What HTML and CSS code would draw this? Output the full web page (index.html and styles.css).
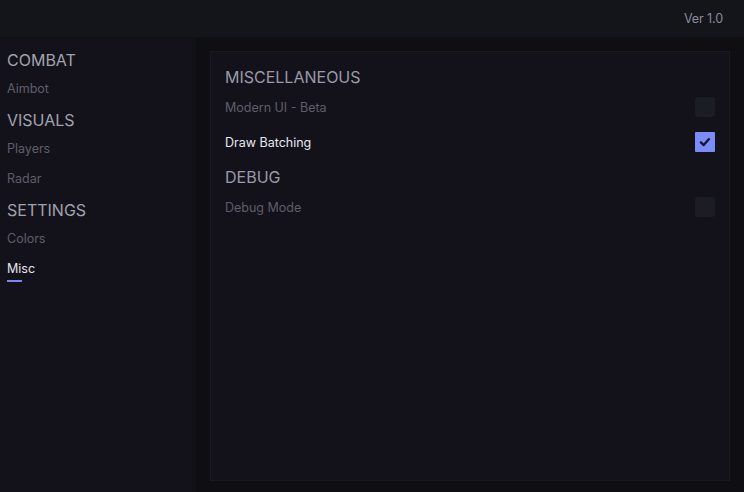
FILE: index.html
```html
<!DOCTYPE html>
<html>
<head>
<meta charset="utf-8">
<link rel="stylesheet" href="styles.css">
</head>
<body>
<div class="app">
  <header class="topbar">
    <span class="version">Ver 1.0</span>
  </header>
  <div class="body">
    <nav class="sidebar">
      <div class="group">COMBAT</div>
      <div class="item">Aimbot</div>
      <div class="group">VISUALS</div>
      <div class="item">Players</div>
      <div class="item">Radar</div>
      <div class="group">SETTINGS</div>
      <div class="item">Colors</div>
      <div class="item active">Misc</div>
    </nav>
    <main class="main">
      <section class="panel">
        <h2 class="section">MISCELLANEOUS</h2>
        <div class="row">
          <span class="label">Modern UI - Beta</span>
          <span class="check"></span>
        </div>
        <div class="row on">
          <span class="label">Draw Batching</span>
          <span class="check checked">
            <svg viewBox="0 0 20 20" width="20" height="20"><path d="M5.9 10.4l2.8 2.7 5.3-6" fill="none" stroke="#15152c" stroke-width="2.3" stroke-linecap="round" stroke-linejoin="round"/></svg>
          </span>
        </div>
        <h2 class="section">DEBUG</h2>
        <div class="row">
          <span class="label">Debug Mode</span>
          <span class="check"></span>
        </div>
      </section>
    </main>
  </div>
</div>
</body>
</html>
```
FILE: styles.css
```css
* { box-sizing: border-box; }
html, body { margin: 0; padding: 0; }
body {
  width: 744px;
  height: 492px;
  overflow: hidden;
  background: #0f0f13;
  font-family: Inter, "Liberation Sans", sans-serif;
}
.app { display: flex; flex-direction: column; height: 492px; }
.topbar {
  height: 38px;
  flex: none;
  background: #14141b;
  border-bottom: 1px solid #101015;
  display: flex;
  align-items: center;
  justify-content: flex-end;
  padding-right: 21px;
}
.version { color: #8b8b97; font-size: 12.5px; letter-spacing: -0.1px; }
.body { flex: 1; display: flex; min-height: 0; }
.sidebar {
  width: 196px;
  flex: none;
  background: linear-gradient(to right, #13121b 0, #13121b 188px, #111117 196px);
  padding: 12px 0 0 7px;
  display: flex;
  flex-direction: column;
}
.group {
  color: #a2a2ae;
  font-size: 16px;
  line-height: 20px;
  height: 20px;
  margin-bottom: 10px;
}
.item {
  color: #5e5e69;
  font-size: 12.5px;
  line-height: 18px;
  height: 16px;
  margin-bottom: 14px;
  position: relative;
  align-self: flex-start;
}
.item.active { color: #e4e4ec; }
.item.active::after {
  content: "";
  position: absolute;
  left: 0;
  top: 20px;
  width: 15px;
  height: 2px;
  background: #7b88f2;
}
.main {
  flex: 1;
  padding: 13px 14px 11px 14px;
  background: #0f0f13;
}
.panel {
  height: 100%;
  background: #13121b;
  border: 1px solid #1a1a21;
  padding: 15px 14px 0 14px;
}
.section {
  margin: 0 0 10px 0;
  font-weight: 400;
  color: #9a9aa8;
  font-size: 16px;
  line-height: 20px;
  height: 20px;
}
.row {
  display: flex;
  align-items: center;
  justify-content: space-between;
  height: 20px;
  margin-bottom: 15px;
}
.label { color: #5e5e69; font-size: 12.5px; }
.row.on .label { color: #e8e8f0; }
.check {
  width: 20px;
  height: 20px;
  border-radius: 3px;
  background: #1c1c25;
  display: block;
}
.check.checked { background: #7b8cf8; border-radius: 1px; }
.check svg { display: block; }
```
